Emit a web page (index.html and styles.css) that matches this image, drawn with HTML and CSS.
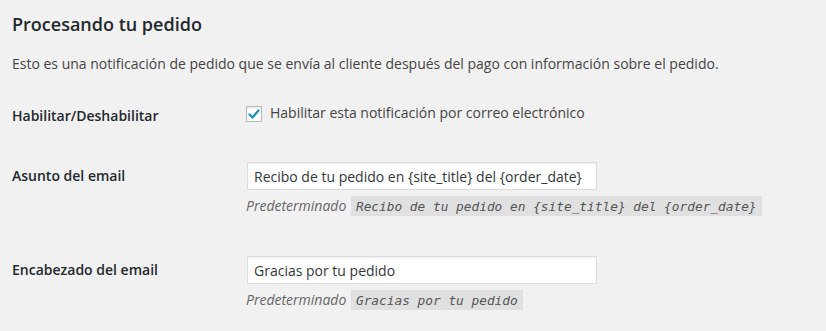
FILE: index.html
```html
<!DOCTYPE html>
<html lang="es">
<head>
  <meta charset="UTF-8" />
  <title>Procesando tu pedido</title>
  <link rel="stylesheet" href="styles.css">
</head>
<body>
  <div class="wrap">
    <h2>Procesando tu pedido</h2>
    <p class="intro">Esto es una notificación de pedido que se envía al cliente después del pago con información sobre el pedido.</p>

    <div class="form-table">
      <div class="row row-check">
        <div class="row-label">Habilitar/Deshabilitar</div>
        <div class="row-field">
          <label class="check-label">
            <span class="checkbox">
              <svg width="14" height="14" viewBox="0 0 14 14"><polyline points="2.5,7.5 5.5,10.5 11.5,3.5" fill="none" stroke="#1e8cbe" stroke-width="2.2" stroke-linecap="round" stroke-linejoin="round"/></svg>
            </span>
            Habilitar esta notificación por correo electrónico
          </label>
        </div>
      </div>

      <div class="row">
        <div class="row-label">Asunto del email</div>
        <div class="row-field">
          <input type="text" class="text-input" value="Recibo de tu pedido en {site_title} del {order_date}" />
          <p class="description">Predeterminado <code>Recibo de tu pedido en {site_title} del {order_date}</code></p>
        </div>
      </div>

      <div class="row">
        <div class="row-label">Encabezado del email</div>
        <div class="row-field">
          <input type="text" class="text-input" value="Gracias por tu pedido" />
          <p class="description">Predeterminado <code>Gracias por tu pedido</code></p>
        </div>
      </div>
    </div>
  </div>
</body>
</html>
```

FILE: styles.css
```css
body {
  margin: 0;
  background: #f1f1f1;
  color: #444;
  font-family: "Open Sans", sans-serif;
  font-size: 14px;
}
.wrap {
  padding: 0 12px;
}
h2 {
  margin: 13px 0 0;
  font-size: 18px;
  line-height: 23px;
  font-weight: 600;
  color: #23282d;
}
.intro {
  margin: 17px 0 0;
  line-height: 21px;
  font-size: 14px;
  color: #444;
}
.form-table {
  margin-top: 13px;
}
.row {
  display: grid;
  grid-template-columns: 234px 1fr;
}
.row-label {
  padding: 20px 0;
  font-size: 14px;
  line-height: 18px;
  font-weight: 600;
  color: #23282d;
}
.row-field {
  padding: 15px 0 24px;
}
.row-check .row-field {
  padding: 15px 0 23px;
}
.check-label {
  display: flex;
  align-items: flex-start;
  gap: 8px;
  font-size: 14px;
  line-height: 22px;
  color: #444;
}
.checkbox {
  box-sizing: border-box;
  width: 16px;
  height: 16px;
  margin-top: 4px;
  border: 1px solid #b4b9be;
  background: #fff;
  box-shadow: inset 0 1px 2px rgba(0,0,0,0.1);
  display: flex;
  align-items: center;
  justify-content: center;
}
.text-input {
  box-sizing: border-box;
  display: block;
  width: 350px;
  height: 28px;
  margin: 0 0 0 1px;
  padding: 3px 6px;
  border: 1px solid #ddd;
  background: #fff;
  box-shadow: inset 0 1px 2px rgba(0,0,0,0.07);
  font-family: "Open Sans", sans-serif;
  font-size: 14px;
  color: #32373c;
  outline: none;
}
.description {
  margin: 6px 0 0;
  line-height: 20px;
  font-size: 14px;
  font-style: italic;
  color: #666;
}
.description code {
  padding: 3px 5px 2px;
  margin: 0 1px;
  background: rgba(0,0,0,0.07);
  font-family: "DejaVu Sans Mono", monospace;
  font-size: 12.8px;
  font-style: italic;
  color: #555;
}
```
